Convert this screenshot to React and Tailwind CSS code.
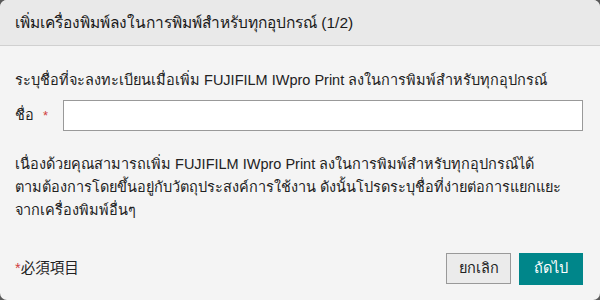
import React, { useState } from 'react';

const App = () => {
  const [name, setName] = useState('');

  return (
    <div className="w-[600px] h-[300px] bg-[#5a5a5a]">
      <div
        className="w-full h-full flex flex-col bg-[#f4f4f4] rounded-[7px] overflow-hidden text-[#222]"
        style={{ fontFamily: '"Liberation Sans", Tahoma, "Noto Sans CJK JP", sans-serif' }}
      >
        {/* HEADER */}
        <div className="h-[46px] shrink-0 flex items-center px-[15px] bg-[#e9e9e9] border-b border-[#d0d0d0]">
          <h1 className="text-[15.5px] text-[#1a1a1a]">เพิ่มเครื่องพิมพ์ลงในการพิมพ์สำหรับทุกอุปกรณ์ (1/2)</h1>
        </div>

        {/* BODY */}
        <div className="flex-1 flex flex-col px-[15px] pt-[22px]">
          <p className="text-[14.5px] leading-[24px] whitespace-nowrap">
            ระบุชื่อที่จะลงทะเบียนเมื่อเพิ่ม FUJIFILM IWpro Print ลงในการพิมพ์สำหรับทุกอุปกรณ์
          </p>

          <div className="flex items-center mt-[8px]">
            <label className="w-[48px] text-[14.5px] flex items-center">
              ชื่อ <span className="text-[#d04040] ml-[9px] text-[13px]">*</span>
            </label>
            <input
              value={name}
              onChange={(e) => setName(e.target.value)}
              className="w-[520px] h-[31px] bg-white border border-[#999] outline-none px-2 text-[14px]"
            />
          </div>

          <p className="text-[14.5px] leading-[23px] mt-[22px] whitespace-nowrap">
            เนื่องด้วยคุณสามารถเพิ่ม FUJIFILM IWpro Print ลงในการพิมพ์สำหรับทุกอุปกรณ์ได้
            <br />
            ตามต้องการโดยขึ้นอยู่กับวัตถุประสงค์การใช้งาน ดังนั้นโปรดระบุชื่อที่ง่ายต่อการแยกแยะ
            <br />
            จากเครื่องพิมพ์อื่นๆ
          </p>
        </div>

        {/* FOOTER */}
        <div className="h-[60px] shrink-0 flex items-start justify-between pl-[15px] pr-[17px] pt-[13px]">
          <div className="text-[14.5px] mt-[5px]">
            <span className="text-[#d04040]">*</span>必須項目
          </div>
          <div className="flex gap-[8px]">
            <button className="w-[65px] h-[31px] bg-[#ebebeb] border border-[#999] text-[14.5px] text-[#222]">
              ยกเลิก
            </button>
            <button className="w-[64px] h-[32px] bg-[#00868a] text-white text-[14.5px]">
              ถัดไป
            </button>
          </div>
        </div>
      </div>
    </div>
  );
};

export default App;
